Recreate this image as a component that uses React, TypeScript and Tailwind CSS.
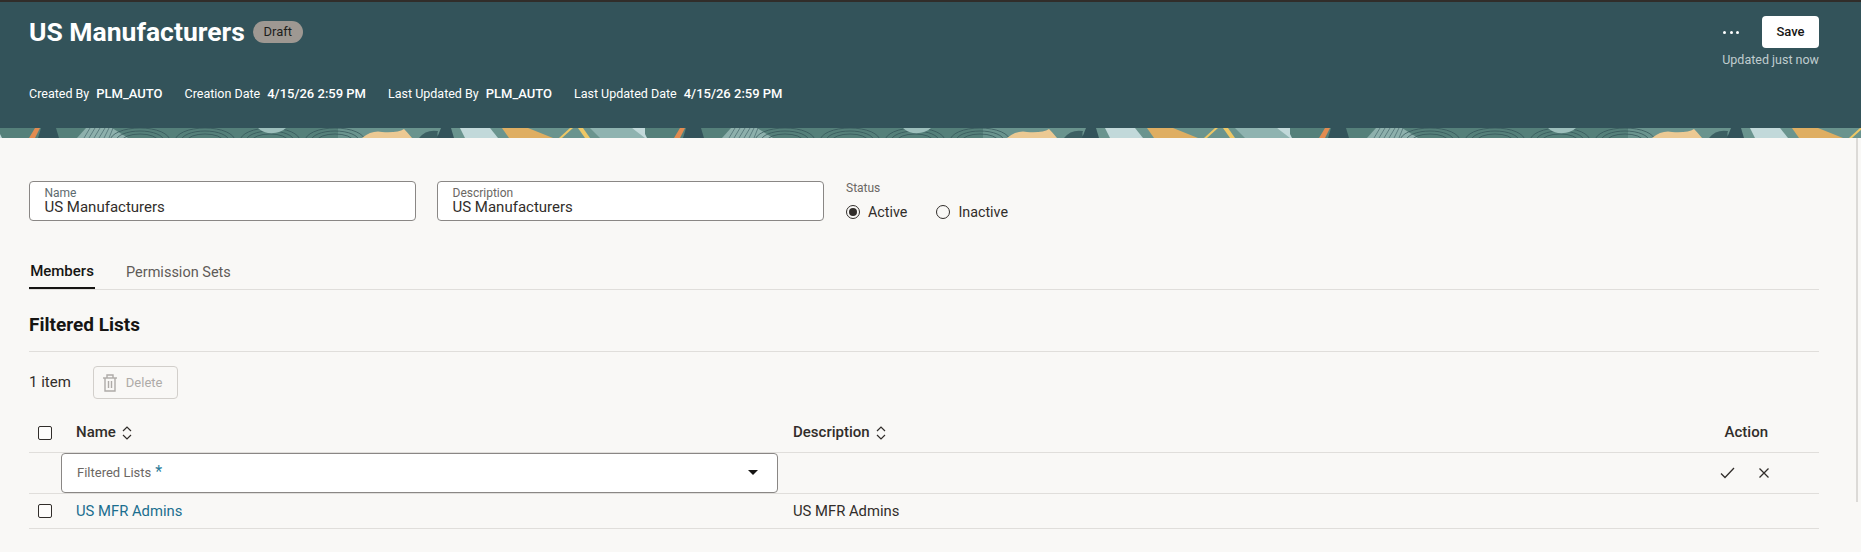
const font = "font-['Roboto','Noto_Sans',sans-serif]";

function HeaderPattern() {
  const pale = '#c2d9da';
  const dark = '#33535a';
  const arcs = [170, 235, 300, 365];
  return (
    <svg className="block h-[10px] w-full" height="10" aria-hidden="true">
      <defs>
        <pattern id="band" width="645" height="10" patternUnits="userSpaceOnUse">
          <rect width="645" height="10" fill="#55807a" />
          <rect x="338" width="307" height="10" fill="#6a948e" />
          <path d="M0 6 L2 10 L0 10Z" fill={pale} />
          <path d="M35 0 L40 0 L35 10 L29 10Z" fill="#e28b50" />
          <path d="M41 0 L56 0 L59 10 L38 10Z" fill={dark} />
          <path d="M86 0 L112 0 L128 10 L77 10Z" fill="#8db0ac" />
          <path
            d="M84 10 L90 0 M89 10 L95 0 M94 10 L100 0 M99 10 L105 0 M104 10 L109 0 M109 10 L113 0"
            stroke="#44666a"
            strokeWidth="0.7"
          />
          {arcs.map((cx) => (
            <g key={cx} fill="none" stroke="#2f5054" strokeWidth="0.7">
              <ellipse cx={cx - 30} cy="13" rx="30" ry="13" />
              <ellipse cx={cx - 30} cy="13" rx="24" ry="10" />
              <ellipse cx={cx - 30} cy="13" rx="18" ry="7" />
            </g>
          ))}
          <path d="M258 0 L286 0 Q280 6 268 5 Q262 4 258 0Z" fill="#9dbfbc" />
          <path d="M362 10 Q372 2 382 4 Q398 5 404 1 Q408 5 412 10Z" fill="#ecc993" />
          <path d="M419 10 Q426 1 438 3 Q436 8 440 10Z" fill="#3c5f62" />
          <path d="M441 0 L451 0 L454 10 L437 10Z" fill={dark} />
          <path d="M460 0 L490 0 L498 10 L465 10Z" fill={pale} />
          <path d="M502 0 L528 0 L553 10 L509 10Z" fill="#dfae62" />
          <path d="M570 0 L559 10 L562 10 L573 0Z" fill="#eec765" />
          <path d="M578 0 L583 0 L590 10 L585 10Z" fill="#eec765" />
          <path d="M590 0 L632 0 L645 5 L645 10 L600 10Z" fill="#8fb3b0" />
          <path d="M632 0 L645 0 L645 10Z" fill={pale} />
        </pattern>
      </defs>
      <rect width="100%" height="10" fill="url(#band)" />
    </svg>
  );
}

function SortIcon() {
  return (
    <svg width="10" height="14" viewBox="0 0 10 14" fill="none" stroke="#312d2a" strokeWidth="1.2" aria-hidden="true">
      <path d="M1 5 L5 1 L9 5" />
      <path d="M1 9 L5 13 L9 9" />
    </svg>
  );
}

function TrashIcon() {
  return (
    <svg width="16" height="18" viewBox="0 0 16 18" fill="none" stroke="#aeaba8" strokeWidth="1.4" aria-hidden="true">
      <path d="M1 4 H15" />
      <path d="M5 4 V1 H11 V4" />
      <path d="M3 4 V17 H13 V4" />
      <path d="M6.5 7 V14 M9.5 7 V14" />
    </svg>
  );
}

function Checkbox() {
  return <span className="block h-[14px] w-[14px] rounded-[2px] border-[1.5px] border-[#312d2a] bg-[#fdfcfb]" />;
}

function Radio({ checked, label }: { checked?: boolean; label: string }) {
  return (
    <div className="flex items-center gap-[8px]">
      <span className="flex h-[14px] w-[14px] items-center justify-center rounded-full border-[1.2px] border-[#312d2a]">
        {checked && <span className="h-[8px] w-[8px] rounded-full bg-[#312d2a]" />}
      </span>
      <span className="text-[14.3px] leading-[18px] text-[#312d2a]">{label}</span>
    </div>
  );
}

function TextField({ label, value, labelColor }: { label: string; value: string; labelColor: string }) {
  return (
    <div className="flex h-[40px] w-[387px] flex-col justify-center rounded-[4px] border border-[#8a8785] bg-white pb-[1px] pl-[14.5px] pr-[15px]">
      <span className={`text-[12px] leading-[14px] ${labelColor}`}>{label}</span>
      <span className="text-[15px] leading-[15px] text-[#312d2a]">{value}</span>
    </div>
  );
}

function Meta({ label, value }: { label: string; value: string }) {
  return (
    <div className="flex items-center gap-[7px]">
      <span className="text-[12.5px]">{label}</span>
      <span className="font-medium">{value}</span>
    </div>
  );
}

export default function App() {
  return (
    <div className={`relative h-[552px] w-full overflow-hidden bg-[#f9f8f6] text-[#312d2a] ${font}`}>
      <div className="h-[2px] bg-[#312d2a]" />

      {/* Page header */}
      <div className="flex h-[126px] justify-between bg-[#33535a] pl-[29px] pr-[42px] text-white">
        <div>
          <div className="mt-[19px] flex h-[22px] items-center gap-[8px]">
            <h1 className="text-[26.5px] font-bold leading-[30px]">US Manufacturers</h1>
            <span className="flex h-[22px] w-[50px] items-center justify-center rounded-full bg-[#9e9892] text-[13px] text-[#201e1c]">
              Draft
            </span>
          </div>
          <div className="mt-[42px] flex gap-[22px] text-[13px] leading-[18px]">
            <Meta label="Created By" value="PLM_AUTO" />
            <Meta label="Creation Date" value="4/15/26 2:59 PM" />
            <Meta label="Last Updated By" value="PLM_AUTO" />
            <Meta label="Last Updated Date" value="4/15/26 2:59 PM" />
          </div>
        </div>
        <div className="flex flex-col items-end pt-[14px]">
          <div className="flex items-center gap-[23px]">
            <div className="flex gap-[3.5px]">
              <span className="h-[3px] w-[3px] rounded-full bg-white" />
              <span className="h-[3px] w-[3px] rounded-full bg-white" />
              <span className="h-[3px] w-[3px] rounded-full bg-white" />
            </div>
            <button className="h-[32px] w-[57px] rounded-[4px] bg-white text-[13px] font-medium text-[#161513]">
              Save
            </button>
          </div>
          <span className="mt-[3px] text-[12.5px] leading-[18px] text-[#c0cdcf]">Updated just now</span>
        </div>
      </div>
      <HeaderPattern />

      {/* Scrollbar */}
      <div className="absolute right-[3px] top-[138px] h-[364px] w-[2px] bg-[#dcdad7]" />

      <div className="pl-[29px] pr-[42px]">
        {/* Form */}
        <div className="mt-[43px] flex h-[40px] gap-[21px]">
          <TextField label="Name" value="US Manufacturers" labelColor="text-[#5d6a6e]" />
          <TextField label="Description" value="US Manufacturers" labelColor="text-[#6b6764]" />
          <div className="ml-[1px] w-[170px]">
            <div className="text-[12px] leading-[14px] text-[#6b6764]">Status</div>
            <div className="mt-[8px] flex gap-[29px]">
              <Radio checked label="Active" />
              <Radio label="Inactive" />
            </div>
          </div>
        </div>

        {/* Tabs */}
        <div className="mt-[33px] flex h-[36px] gap-[31px] border-b border-[#e0dedb] text-[15px]">
          <div className="flex h-[35px] w-[66px] items-center justify-center border-b-[2px] border-[#161513] pt-[2px] font-medium text-[#161513]">
            Members
          </div>
          <div className="flex h-[35px] items-center pt-[2px] text-[14.5px] text-[#5f5b58]">Permission Sets</div>
        </div>

        {/* Filtered Lists */}
        <div className="h-[62px] border-b border-[#e0dedb] pt-[21px]">
          <h2 className="text-[19px] font-bold leading-[28px] text-[#161513]">Filtered Lists</h2>
        </div>

        <div className="mt-[14px] flex items-center gap-[22px]">
          <span className="text-[15px] text-[#312d2a]">1 item</span>
          <button className="flex h-[33px] w-[85px] items-center gap-[8px] rounded-[4px] border border-[#d2cfcb] pl-[8px] text-[13px] text-[#aeaba8]">
            <TrashIcon />
            Delete
          </button>
        </div>

        {/* Table */}
        <div className="mt-[14px] flex h-[40px] items-center border-b border-[#e0dedb] pl-[9px] text-[15px] font-medium">
          <Checkbox />
          <div className="ml-[24px] flex w-[717px] items-center gap-[6px]">
            Name
            <SortIcon />
          </div>
          <div className="flex items-center gap-[6px]">
            Description
            <SortIcon />
          </div>
          <div className="ml-auto mr-[51px]">Action</div>
        </div>

        <div className="flex h-[41px] items-center border-b border-[#e0dedb] pb-[1px]">
          <div className="ml-[32px] flex h-[40px] w-[717px] items-center justify-between rounded-[4px] border border-[#8a8785] bg-white pl-[15px] pr-[19px]">
            <span className="flex items-start gap-[4px] text-[13px] leading-[18px] text-[#6b6764]">
              Filtered Lists
              <span className="text-[16px] leading-[16px] text-[#2d7d9a]">*</span>
            </span>
            <svg width="10" height="5" viewBox="0 0 10 5" aria-hidden="true">
              <path d="M0 0 H10 L5 5Z" fill="#161513" />
            </svg>
          </div>
          <div className="ml-auto mr-[50px] flex items-center gap-[24px]">
            <svg width="15" height="12" viewBox="0 0 15 12" fill="none" stroke="#312d2a" strokeWidth="1.3" aria-hidden="true">
              <path d="M1 6.5 L5 10.5 L14 1" />
            </svg>
            <svg width="10" height="10" viewBox="0 0 10 10" fill="none" stroke="#312d2a" strokeWidth="1.3" aria-hidden="true">
              <path d="M0.5 0.5 L9.5 9.5 M9.5 0.5 L0.5 9.5" />
            </svg>
          </div>
        </div>

        <div className="flex h-[35px] items-center border-b border-[#e0dedb] pl-[9px] text-[14.8px]">
          <Checkbox />
          <a className="ml-[24px] w-[717px] text-[#1b6e8f]">US MFR Admins</a>
          <span>US MFR Admins</span>
        </div>
      </div>
    </div>
  );
}
